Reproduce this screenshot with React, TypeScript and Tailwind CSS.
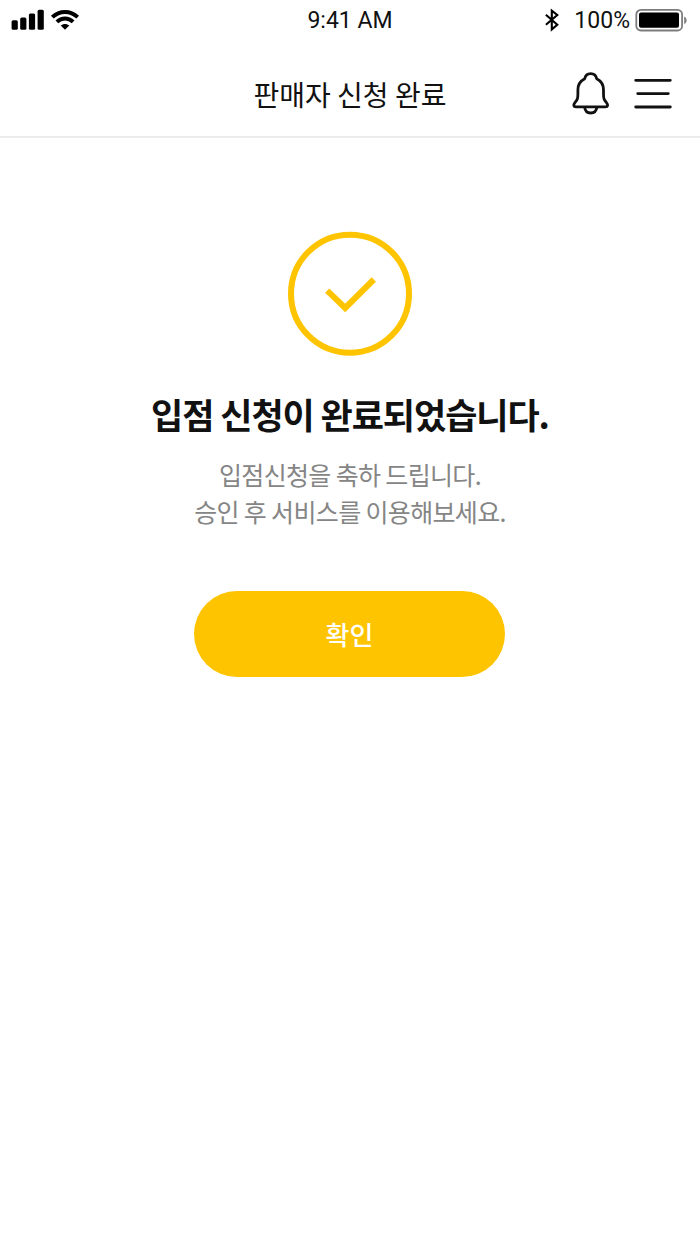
import React from 'react';

const SignalIcon: React.FC = () => (
  <svg className="h-6 w-9" viewBox="0 0 36 24" fill="#000">
    <rect x="1.6" y="12.3" width="6.2" height="9.5" rx="1.5" />
    <rect x="10.2" y="9.4" width="6.2" height="12.4" rx="1.5" />
    <rect x="18.9" y="5.5" width="6.2" height="16.3" rx="1.5" />
    <rect x="27.6" y="1.8" width="6.2" height="20" rx="1.5" />
  </svg>
);

const WifiIcon: React.FC = () => (
  <svg className="h-6 w-8" viewBox="0 0 32 24" fill="none" stroke="#000" strokeWidth="3.9">
    <path d="M3.3 9.2C10.5 2.2 21.5 2.2 28.7 9.2" />
    <path d="M7.9 13.8C12.6 9.3 19.4 9.3 24.1 13.8" />
    <path d="M16 21.8L11.7 17.5C14.2 15.4 17.8 15.4 20.3 17.5Z" fill="#000" stroke="none" />
  </svg>
);

const BluetoothIcon: React.FC = () => (
  <svg className="h-6 w-4" viewBox="0 0 16 24" fill="none" stroke="#000" strokeWidth="2.1">
    <path d="M1.9 6.8L13.3 16.8L7.8 21.4V2.6L13.3 7L1.9 16.8" />
  </svg>
);

const BatteryIcon: React.FC = () => (
  <svg className="h-6 w-[54px]" viewBox="0 0 54 24">
    <rect x="1.3" y="1.9" width="45.8" height="20.6" rx="4.6" fill="none" stroke="#7d7d7d" strokeWidth="1.8" />
    <rect x="4" y="4.6" width="40" height="15.2" rx="2" fill="#000" />
    <path d="M49.2 8.4C52.4 9.8 52.4 14.7 49.2 16.1Z" fill="#7d7d7d" />
  </svg>
);

const BellIcon: React.FC = () => (
  <svg className="h-11 w-10" viewBox="0 0 40 44" fill="none" stroke="#111" strokeWidth="2.8" strokeLinejoin="round">
    <path d="M19.7 1.7C16.5 1.7 14.3 3.8 13.7 6.8C9.6 8.9 6.9 12.8 6.9 17.9V21.8C6.9 26.7 6.3 27.7 4.1 30.4C2 33.1 2.5 34.9 5 34.9H34.4C36.9 34.9 37.4 33.1 35.3 30.4C33.1 27.7 32.5 26.7 32.5 21.8V17.9C32.5 12.8 29.8 8.9 25.7 6.8C25.1 3.8 22.9 1.7 19.7 1.7Z" />
    <path d="M13.7 35.4C14.1 39.1 16.4 41 19.7 41C23.1 41 25.4 39.1 25.8 35.4" />
  </svg>
);

const MenuIcon: React.FC = () => (
  <svg className="h-11 w-10" viewBox="0 0 40 44" stroke="#111" strokeWidth="2.8" strokeLinecap="round">
    <path d="M2.7 8.3H37.3M4.7 21.6H35.3M2.7 35H37.3" />
  </svg>
);

const StatusBar: React.FC = () => (
  <div className="grid h-10 grid-cols-3 items-center font-['Roboto',sans-serif] text-[23px] text-[#111]">
    <div className="flex items-center gap-[3px] pl-2.5">
      <SignalIcon />
      <WifiIcon />
    </div>
    <div className="pt-0.5 text-center">9:41 AM</div>
    <div className="flex items-center justify-end pr-[11px]">
      <BluetoothIcon />
      <span className="mr-[5px] ml-3.5 pt-0.5">100%</span>
      <BatteryIcon />
    </div>
  </div>
);

const Header: React.FC = () => (
  <header className="grid h-[98px] grid-cols-[1fr_auto_1fr] items-center border-b-2 border-[#ebebeb] pt-3 text-[#111]">
    <h1 className="col-start-2 text-[28px] leading-10">판매자 신청 완료</h1>
    <div className="flex items-center justify-end gap-[22px] pr-[27px]">
      <button aria-label="알림">
        <BellIcon />
      </button>
      <button aria-label="메뉴">
        <MenuIcon />
      </button>
    </div>
  </header>
);

export default function App() {
  return (
    <div className="min-h-[1244px] bg-white font-['Noto_Sans_CJK_KR',sans-serif]">
      <StatusBar />
      <Header />
      <main className="flex flex-col items-center pt-[93px] text-center">
        <svg className="h-[126px] w-[126px]" viewBox="0 0 126 126" fill="none" stroke="#ffc400" strokeWidth="6">
          <circle cx="63" cy="62.7" r="59" />
          <path d="M40.2 59.6L58.2 77L86.8 48.5" />
        </svg>
        <h2 className="mt-8 text-[35px] leading-[50px] font-bold tracking-[-1.05px] text-[#111]">
          입점 신청이 완료되었습니다.
        </h2>
        <p className="mt-[17px] text-[25px] leading-[36.5px] tracking-[-0.65px] text-[#858585]">
          입점신청을 축하 드립니다.
          <br />
          승인 후 서비스를 이용해보세요.
        </p>
        <button className="mt-[62px] mr-px h-[85.5px] w-[311px] rounded-full bg-[#ffc400] text-[26px] font-medium text-white">
          확인
        </button>
      </main>
    </div>
  );
}
